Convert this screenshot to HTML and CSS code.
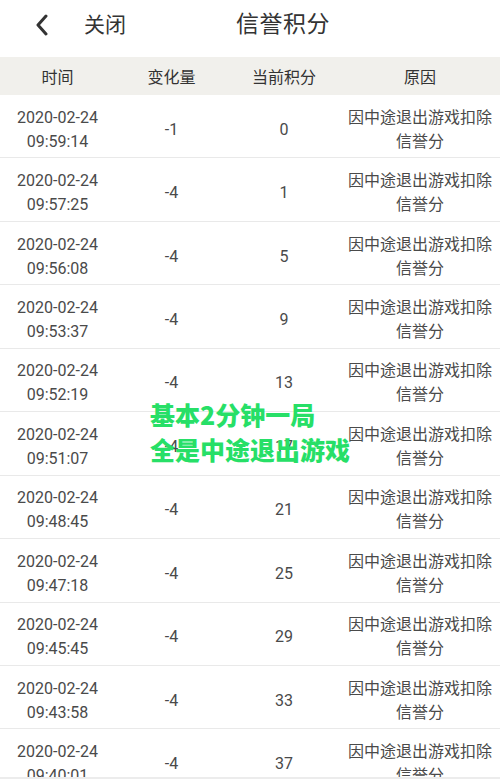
FILE: index.html
```html
<!DOCTYPE html>
<html lang="zh">
<head>
<meta charset="utf-8">
<title>信誉积分</title>
<link rel="stylesheet" href="styles.css">
</head>
<body>
<div class="page">
  <header class="topbar">
    <div class="back">
      <svg class="chev" width="14" height="22" viewBox="0 0 14 22"><path d="M11 2 L3 11 L11 20" fill="none" stroke="#333" stroke-width="3" stroke-linecap="round" stroke-linejoin="round"/></svg>
      <span class="close">关闭</span>
    </div>
    <h1 class="title">信誉积分</h1>
  </header>
  <div class="thead">
    <div>时间</div><div>变化量</div><div>当前积分</div><div>原因</div>
  </div>
  <div class="tbody">
    <div class="row"><div>2020-02-24<br>09:59:14</div><div>-1</div><div>0</div><div>因中途退出游戏扣除<br>信誉分</div></div>
    <div class="row"><div>2020-02-24<br>09:57:25</div><div>-4</div><div>1</div><div>因中途退出游戏扣除<br>信誉分</div></div>
    <div class="row"><div>2020-02-24<br>09:56:08</div><div>-4</div><div>5</div><div>因中途退出游戏扣除<br>信誉分</div></div>
    <div class="row"><div>2020-02-24<br>09:53:37</div><div>-4</div><div>9</div><div>因中途退出游戏扣除<br>信誉分</div></div>
    <div class="row"><div>2020-02-24<br>09:52:19</div><div>-4</div><div>13</div><div>因中途退出游戏扣除<br>信誉分</div></div>
    <div class="row"><div>2020-02-24<br>09:51:07</div><div>-4</div><div>17</div><div>因中途退出游戏扣除<br>信誉分</div></div>
    <div class="row"><div>2020-02-24<br>09:48:45</div><div>-4</div><div>21</div><div>因中途退出游戏扣除<br>信誉分</div></div>
    <div class="row"><div>2020-02-24<br>09:47:18</div><div>-4</div><div>25</div><div>因中途退出游戏扣除<br>信誉分</div></div>
    <div class="row"><div>2020-02-24<br>09:45:45</div><div>-4</div><div>29</div><div>因中途退出游戏扣除<br>信誉分</div></div>
    <div class="row"><div>2020-02-24<br>09:43:58</div><div>-4</div><div>33</div><div>因中途退出游戏扣除<br>信誉分</div></div>
    <div class="row"><div>2020-02-24<br>09:40:01</div><div>-4</div><div>37</div><div>因中途退出游戏扣除<br>信誉分</div></div>
  </div>
  <div class="overlay">基本2分钟一局<br>全是中途退出游戏</div>
  <div class="bottomstrip"></div>
</div>
</body>
</html>
```
FILE: styles.css
```css
html, body {
  margin: 0;
  padding: 0;
  background: #fff;
}
body {
  font-family: Roboto, "Noto Sans CJK SC", sans-serif;
  color: #444;
  overflow: hidden;
}
.page {
  position: relative;
  width: 500px;
  height: 779px;
  overflow: hidden;
}
.topbar {
  height: 57px;
  display: flex;
  align-items: center;
  padding-left: 35px;
  box-sizing: border-box;
}
.back {
  display: flex;
  align-items: center;
  gap: 35px;
  padding-bottom: 8px;
}
.chev {
  display: block;
}
.close {
  font-size: 21px;
  color: #333;
  line-height: 30px;
}
.title {
  margin: 0 0 0 110px;
  padding-bottom: 8px;
  font-size: 23px;
  font-weight: normal;
  color: #333;
  line-height: 30px;
  letter-spacing: 0.5px;
}
.thead, .row {
  display: grid;
  grid-template-columns: 115px 113px 112px 160px;
  text-align: center;
}
.thead {
  height: 38px;
  background: #f1f0ec;
  align-items: center;
  font-size: 16px;
  color: #333;
}
.row {
  height: 63.45px;
  box-sizing: border-box;
  border-bottom: 1px solid #e9e9e9;
  align-items: center;
  padding-top: 7px;
  font-size: 16px;
  line-height: 24px;
  color: #4a4a4a;
}
.overlay {
  position: absolute;
  left: 150px;
  top: 397px;
  font-family: "Noto Sans CJK SC", sans-serif;
  font-weight: 900;
  font-size: 25px;
  line-height: 35px;
  color: #27df67;
  letter-spacing: 0;
}
.bottomstrip {
  position: absolute;
  left: 0;
  right: 0;
  bottom: 0;
  height: 2px;
  background: #ececec;
}
```
